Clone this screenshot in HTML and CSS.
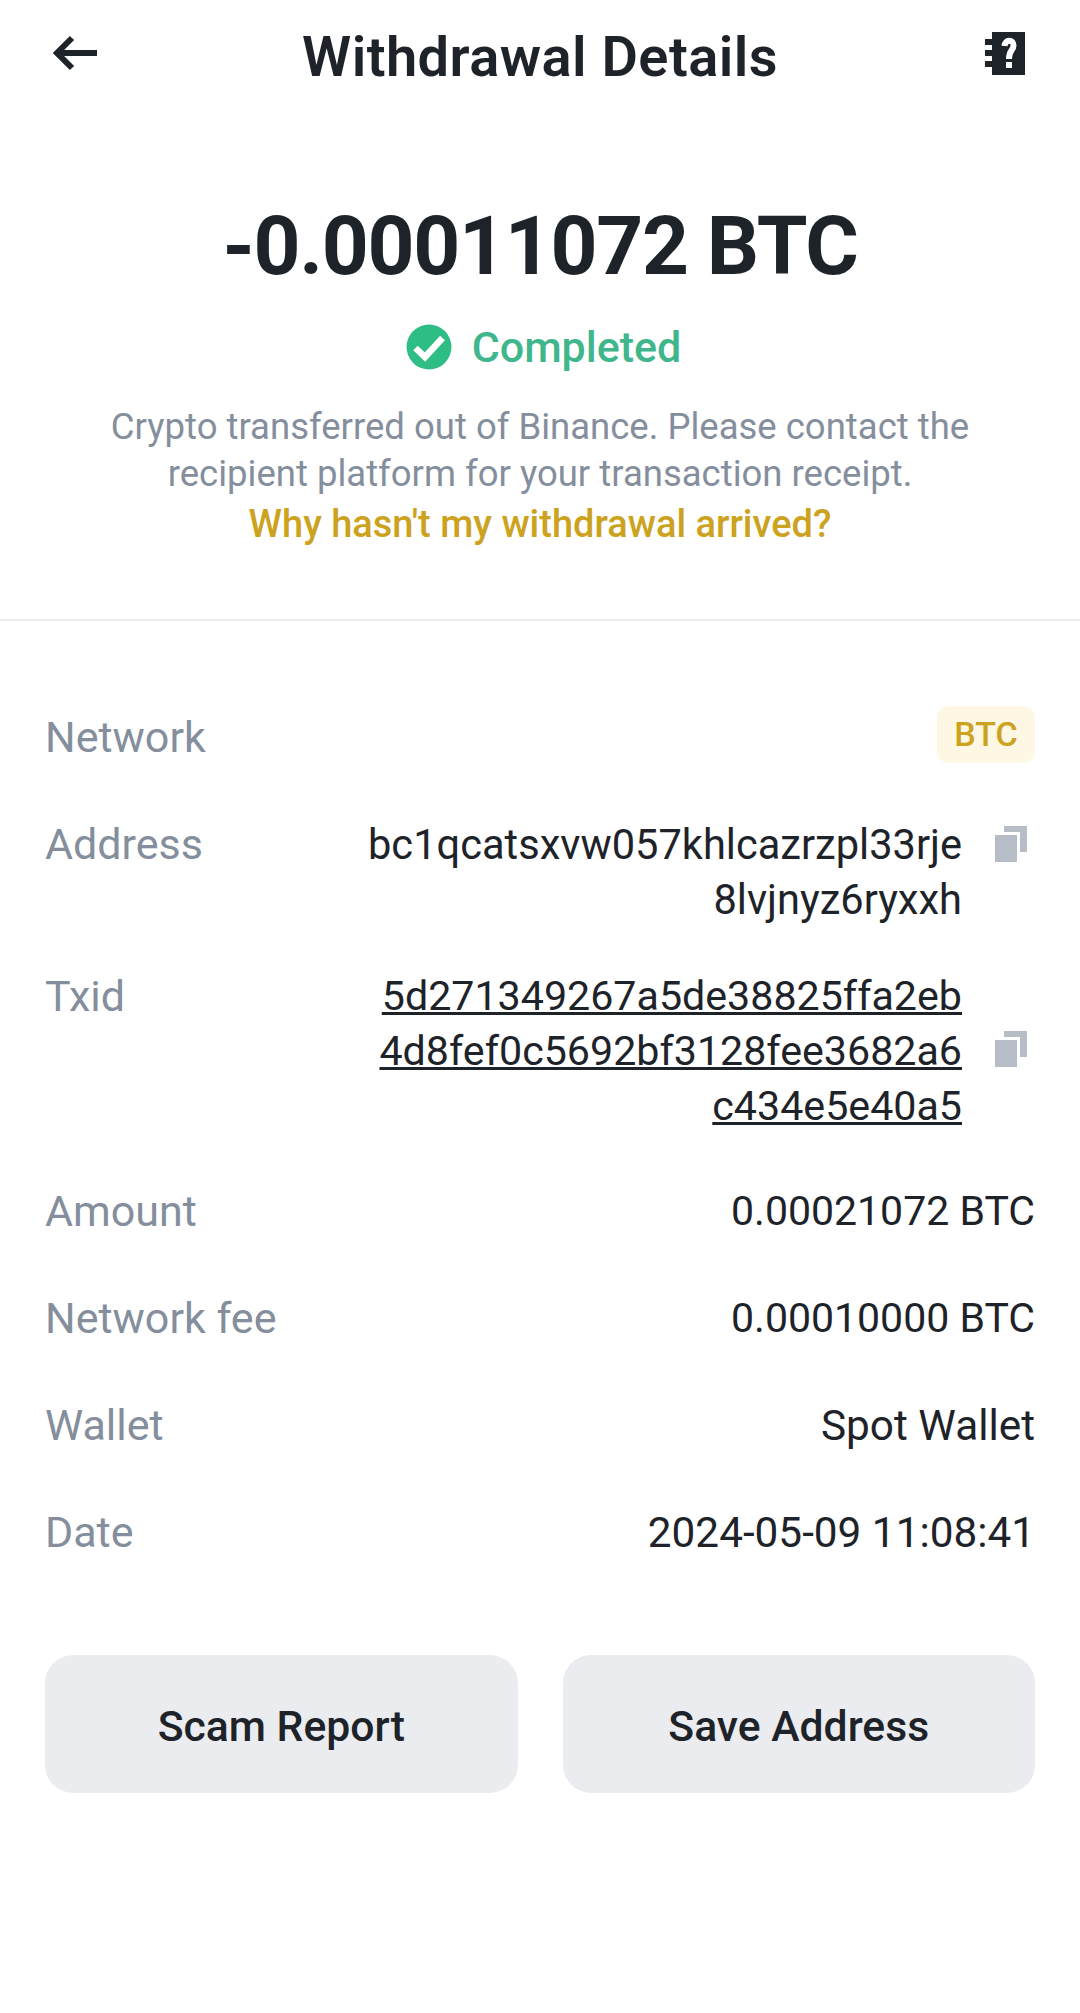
FILE: index.html
```html
<!DOCTYPE html>
<html lang="en">
<head>
  <meta charset="UTF-8" />
  <meta name="viewport" content="width=device-width, initial-scale=1.0" />
  <title>Withdrawal Details</title>
  <link rel="stylesheet" href="styles.css">
</head>
<body>

  <!-- Top bar -->
  <div class="header">
    <svg class="header-icon" viewBox="0 0 54 54">
      <path class="arrow" d="M27 8 L12 23 L27 38 M12 23 H52" />
    </svg>
    <h1 class="title">Withdrawal Details</h1>
    <svg class="header-icon" viewBox="0 0 54 54">
      <path class="help-book" d="M11 2 H44 V45 H11 V37 H4 V31 H11 V26 H4 V20 H11 V15 H4 V9 H11 Z" />
      <path class="help-mark" d="M23.5 16 C24 9 32.5 9 32.5 15.5 C32.5 20.5 28 20 28 29" />
      <rect class="help-dot" x="25" y="32" width="6" height="6" />
    </svg>
  </div>

  <!-- Amount and status -->
  <div class="summary">
    <div class="amount">-0.00011072 BTC</div>
    <div class="status">
      <svg class="status-icon" viewBox="0 0 46 46">
        <circle cx="23" cy="23" r="22.5" fill="#2ebd85" />
        <path d="M9.5 24 L19 33 L36.5 14" fill="none" stroke="#fff" stroke-width="6.5" />
      </svg>
      <span>Completed</span>
    </div>
    <p class="note">Crypto transferred out of Binance. Please contact the<br>recipient platform for your transaction receipt.</p>
    <a class="help-link">Why hasn't my withdrawal arrived?</a>
  </div>

  <!-- Detail rows -->
  <div class="details">
    <div class="row row-network">
      <span class="label">Network</span>
      <span class="badge">BTC</span>
    </div>
    <div class="row row-address">
      <span class="label">Address</span>
      <div class="value-copy">
        <span class="value">bc1qcatsxvw057khlcazrzpl33rje<br>8lvjnyz6ryxxh</span>
        <svg class="copy-icon copy-top" viewBox="0 0 32 36"><path d="M9 0 H32 V26 H25 V6 H9 Z M0 9 H22 V36 H0 Z" /></svg>
      </div>
    </div>
    <div class="row row-txid">
      <span class="label">Txid</span>
      <div class="value-copy">
        <span class="value txid">5d271349267a5de38825ffa2eb<br>4d8fef0c5692bf3128fee3682a6<br>c434e5e40a5</span>
        <svg class="copy-icon copy-mid" viewBox="0 0 32 36"><path d="M9 0 H32 V26 H25 V6 H9 Z M0 9 H22 V36 H0 Z" /></svg>
      </div>
    </div>
    <div class="row">
      <span class="label">Amount</span>
      <span class="value value-sm">0.00021072 BTC</span>
    </div>
    <div class="row">
      <span class="label">Network fee</span>
      <span class="value value-sm">0.00010000 BTC</span>
    </div>
    <div class="row">
      <span class="label">Wallet</span>
      <span class="value value-lg">Spot Wallet</span>
    </div>
    <div class="row">
      <span class="label">Date</span>
      <span class="value value-lg">2024-05-09 11:08:41</span>
    </div>
  </div>

  <div class="actions">
    <button class="action">Scam Report</button>
    <button class="action">Save Address</button>
  </div>

</body>
</html>
```

FILE: styles.css
```css
body {
  margin: 0;
  background: #fff;
  color: #1e2329;
  font-family: Roboto, "Liberation Sans", sans-serif;
}

.header {
  display: flex;
  justify-content: space-between;
  padding: 30px 45px 30px;
}

.header-icon {
  display: block;
  width: 54px;
  height: 54px;
}

.arrow {
  fill: none;
  stroke: #1e2329;
  stroke-width: 6px;
}

.help-book {
  fill: #1e2329;
}

.help-mark {
  fill: none;
  stroke: #fff;
  stroke-width: 6px;
}

.help-dot {
  fill: #fff;
}

.title {
  margin: 0;
  font-size: 56px;
  line-height: 54px;
  font-weight: 600;
  letter-spacing: 0.45px;
}

/* Amount and status */
.summary {
  padding: 87px 0 70px;
  text-align: center;
  border-bottom: 2px solid #eaecef;
}

.amount {
  font-size: 82px;
  line-height: 90px;
  font-weight: 700;
  letter-spacing: -1.3px;
}

.status {
  display: flex;
  justify-content: center;
  align-items: center;
  gap: 20px;
  margin-top: 31px;
  padding-left: 7px;
  height: 50px;
  font-size: 43px;
  font-weight: 500;
  color: #3fb68b;
}

.status-icon {
  width: 46px;
  height: 46px;
}

.note {
  margin: 31px 0 0;
  font-size: 36.5px;
  line-height: 47px;
  color: #848e9c;
}

.help-link {
  display: block;
  margin-top: 2px;
  font-size: 38px;
  line-height: 50px;
  font-weight: 500;
  color: #cca21e;
}

/* Detail rows */
.details {
  padding: 85px 45px 0;
}

.row {
  display: flex;
  justify-content: space-between;
  align-items: flex-start;
  margin-bottom: 52px;
  font-size: 41.6px;
  line-height: 55px;
}

.row:last-child {
  margin-bottom: 0;
}

.row-network {
  align-items: center;
  height: 57px;
  margin-bottom: 54px;
}

.row-network .label {
  padding-top: 6px;
}

.row-address {
  margin-bottom: 42px;
}

.row-txid {
  margin-bottom: 50px;
}

.label {
  font-size: 43px;
  color: #848e9c;
}

.value {
  text-align: right;
}

.value-sm {
  font-size: 41px;
}

.value-lg {
  font-size: 42.3px;
}

.txid {
  font-size: 41.2px;
  text-decoration: underline;
  text-decoration-thickness: 3px;
}

.value-copy {
  display: flex;
  align-items: center;
  gap: 33px;
  padding-right: 8px;
}

.copy-icon {
  width: 32px;
  height: 36px;
  fill: #b7bdc6;
}

.copy-top {
  align-self: flex-start;
  margin-top: 9px;
}

.copy-mid {
  margin-bottom: 5px;
}

.badge {
  width: 98px;
  height: 57px;
  border-radius: 12px;
  background: #fdf7e3;
  color: #cca21e;
  font-size: 34px;
  font-weight: 500;
  line-height: 57px;
  text-align: center;
}

.actions {
  display: flex;
  gap: 45px;
  margin-top: 95px;
  padding: 0 45px;
}

.action {
  flex: 1;
  height: 138px;
  padding-top: 5px;
  border: none;
  border-radius: 28px;
  background: #eaecef;
  color: #1e2329;
  font-family: inherit;
  font-size: 42.7px;
  font-weight: 500;
}
```
